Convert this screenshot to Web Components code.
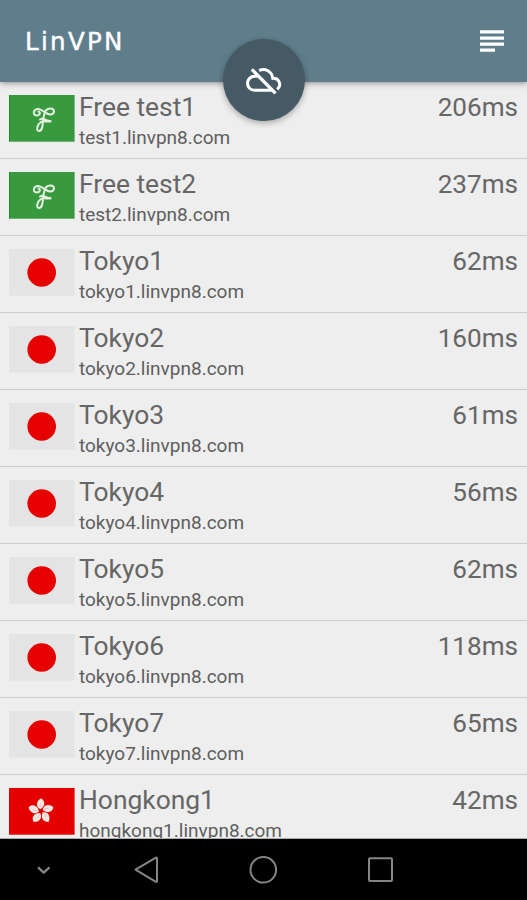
<!DOCTYPE html>
<html lang="en"><head><meta charset="utf-8"><title>LinVPN</title>
<style>html,body{margin:0;height:100%;overflow:hidden}</style></head><body>
<vpn-app></vpn-app>
<script>
const define = (name, html) => customElements.define(name, class extends HTMLElement {
  connectedCallback() {
    if (this.shadowRoot) return;
    const t = document.createElement('template');
    t.innerHTML = typeof html === 'function' ? html(this) : html;
    this.attachShadow({mode: 'open'}).append(t.content.cloneNode(true));
  }
});

define('app-bar', `<style>
:host{display:flex;flex:none;height:82px;box-sizing:border-box;align-items:center;justify-content:space-between;padding:0 23px 0 25px;background:#607d8b;color:#fff;position:relative;z-index:2;box-shadow:0 1px 6px rgba(0,0,0,.42)}
.t{font:400 24.500px/30px "DejaVu Sans","Liberation Sans",sans-serif;letter-spacing:2.300px;padding-top:2px;-webkit-text-stroke:.4px #fff}
svg{display:block}
::slotted(*){position:absolute;left:222.5px;top:39px}
</style><span class="t">LinVPN</span><slot></slot>
<svg width="24" height="22" viewBox="0 0 24 22" fill="#fff"><path d="M0 .3h24v3.3H0zM0 6.4h24v3.3H0zM0 12.4h24v3.3H0zM0 18.4h15v3.3H0z"/></svg>`);

define('status-button', `<style>
:host{display:block;width:82px;height:82px;border-radius:50%;background:#455a64;box-shadow:0 2px 6px rgba(0,0,0,.32)}
svg{display:block}
</style><svg width="82" height="82" viewBox="23.500 27 246 246" fill="none" stroke="#fff" stroke-width="9">
<path d="M110 118L181 190" stroke-width="10"/>
<path d="M127 139H118A21 21 0 0 0 118 181H172"/>
<path d="M132 122C150 113 170 124 173 145C190 143 202 164 186 178"/></svg>`);

const petal = a => `<g transform="translate(32 23.2) rotate(${a})"><path d="M-.5-2C-5.500-4.500-4.500-10.500 .5-13C5-10 4.500-5-.5-2Z"/><path d="M-.5-4Q-1.500-6 0-8" stroke="#e99" stroke-width=".5" fill="none"/></g>`;
const art = {
  free: `<rect width="65.600" height="46.700" fill="#39993f"/><path d="M.3 0V46.700" stroke="#148b1c"/><g fill="none" stroke="#e3f1df" stroke-width="2" stroke-linecap="round" stroke-linejoin="round"><path d="M27.500 20.500C23 20 24.500 13.500 29.500 14C34 14.500 37 19.500 41 19.500C46 19.500 46.500 13.500 41.500 13.500C36 13.500 35.500 18 34.500 23C33.500 29 34 36 30 36C26.500 36 28.500 29 32 27C35 25.500 37 27 41.500 26.500M31 24.500C35 22 37 26.500 41.500 26M27.500 20.500C31 20.500 32 17.500 29.500 16.500"/></g>`,
  jp: `<rect width="65.600" height="46.700" fill="#e4e4e4"/><circle cx="32.700" cy="23.500" r="14.300" fill="#e60000"/>`,
  hk: `<rect width="65.600" height="46.700" fill="#e50000"/><g fill="#f3e9e4">${[-2, 70, 142, 214, 286].map(petal).join('')}</g>`
};
define('country-flag', el => `<style>
:host{display:block;width:66px;height:47px}svg{display:block}
</style><svg width="66" height="47" viewBox="0 0 66 47">${art[el.getAttribute('code')]}</svg>`);

define('server-row', el => `<style>
:host{display:flex;flex:none;height:77.060px;box-sizing:border-box;border-bottom:1px solid #ccc;padding:13px 9px 0 9px;gap:4px;color:#666;font-family:Roboto,sans-serif}
.n{flex:1;margin-top:-4px}
.name{font-size:26.400px;line-height:33px}
.ping{font-size:26.100px;line-height:33px;margin-top:-4px}
.host{font-size:19px;line-height:22px;margin-top:3px;color:#5e5e5e}
</style><country-flag code="${el.getAttribute('flag')}"></country-flag>
<div class="n"><div class="name"><slot></slot></div><div class="host">${el.getAttribute('host')}.linvpn8.com</div></div>
<div class="ping">${el.getAttribute('ping')}ms</div>`);

define('nav-bar', `<style>
:host{display:block;flex:none;height:61px;background:#000}svg{display:block}
</style><svg width="527" height="61" viewBox="0 0 527 61" fill="none" stroke="#858585" stroke-width="2" stroke-linejoin="round">
<path d="M38 28.300L43.700 33.600L49.500 28.300" stroke-width="2.300"/>
<path d="M135.500 30.700L155.500 18.800Q157 18 157 19.500V42Q157 43.500 155.500 42.600Z"/>
<circle cx="263.300" cy="30.800" r="12.800"/>
<rect x="369" y="19.200" width="23" height="22.800" rx="1"/></svg>`);

const rows = [['Free test1','test1',206,'free'],['Free test2','test2',237,'free'],
  ...[62,160,61,56,62,118,65].map((p, i) => ['Tokyo' + (i + 1), 'tokyo' + (i + 1), p, 'jp']),
  ['Hongkong1','hongkong1',42,'hk']];
define('vpn-app', `<style>
:host{display:flex;flex-direction:column;width:527px;height:900px;overflow:hidden;background:#eee}
main{flex:1;min-height:0;overflow:hidden;display:flex;flex-direction:column;box-sizing:border-box;border-bottom:1px solid #aaa}
</style><app-bar><status-button></status-button></app-bar>
<main>${rows.map(([n, h, p, f]) => `<server-row host="${h}" ping="${p}" flag="${f}">${n}</server-row>`).join('')}</main>
<nav-bar></nav-bar>`);
</script></body></html>
